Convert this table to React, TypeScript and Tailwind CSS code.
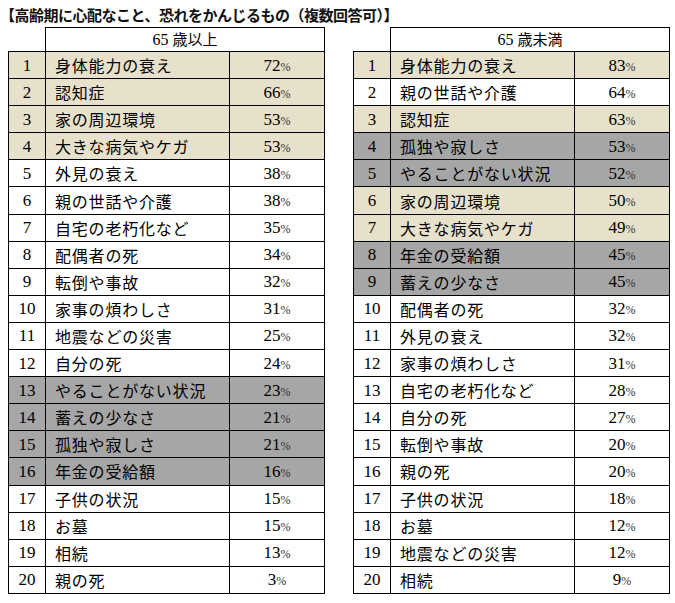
const BEIGE = 'bg-[#e7e1cc]'
const GRAY = 'bg-[#a6a6a6]'

type Row = [number, string, string, string?]

const OVER_65: Row[] = [
  [1, '身体能力の衰え', '72', BEIGE],
  [2, '認知症', '66', BEIGE],
  [3, '家の周辺環境', '53', BEIGE],
  [4, '大きな病気やケガ', '53', BEIGE],
  [5, '外見の衰え', '38'],
  [6, '親の世話や介護', '38'],
  [7, '自宅の老朽化など', '35'],
  [8, '配偶者の死', '34'],
  [9, '転倒や事故', '32'],
  [10, '家事の煩わしさ', '31'],
  [11, '地震などの災害', '25'],
  [12, '自分の死', '24'],
  [13, 'やることがない状況', '23', GRAY],
  [14, '蓄えの少なさ', '21', GRAY],
  [15, '孤独や寂しさ', '21', GRAY],
  [16, '年金の受給額', '16', GRAY],
  [17, '子供の状況', '15'],
  [18, 'お墓', '15'],
  [19, '相続', '13'],
  [20, '親の死', '3'],
]

const UNDER_65: Row[] = [
  [1, '身体能力の衰え', '83', BEIGE],
  [2, '親の世話や介護', '64'],
  [3, '認知症', '63', BEIGE],
  [4, '孤独や寂しさ', '53', GRAY],
  [5, 'やることがない状況', '52', GRAY],
  [6, '家の周辺環境', '50', BEIGE],
  [7, '大きな病気やケガ', '49', BEIGE],
  [8, '年金の受給額', '45', GRAY],
  [9, '蓄えの少なさ', '45', GRAY],
  [10, '配偶者の死', '32'],
  [11, '外見の衰え', '32'],
  [12, '家事の煩わしさ', '31'],
  [13, '自宅の老朽化など', '28'],
  [14, '自分の死', '27'],
  [15, '転倒や事故', '20'],
  [16, '親の死', '20'],
  [17, '子供の状況', '18'],
  [18, 'お墓', '12'],
  [19, '地震などの災害', '12'],
  [20, '相続', '9'],
]

const serif = "font-['Liberation_Serif','Noto_Sans_CJK_JP',serif]"
const jp = "font-['Noto_Sans_CJK_JP',sans-serif]"

function RankTable({ title, rows }: { title: string; rows: Row[] }) {
  return (
    <table className="w-[316px] table-fixed border-collapse text-black">
      <colgroup>
        <col className="w-[37px]" />
        <col className="w-[184px]" />
        <col className="w-[95px]" />
      </colgroup>
      <thead>
        <tr className="h-[24px]">
          <th className="border-0 p-0" />
          <th className={`border border-black p-0 text-center text-[16px] font-normal leading-none ${serif}`} colSpan={2}>
            65<span className={`ml-[4px] ${jp} text-[15px]`}>{title}</span>
          </th>
        </tr>
      </thead>
      <tbody>
        {rows.map(([rank, label, pct, tone]) => (
          <tr className={`h-[27.1px] ${tone ?? 'bg-white'}`} key={rank}>
            <td className={`border border-black p-0 text-center text-[17px] leading-none ${serif}`}>{rank}</td>
            <td className={`border border-black py-0 pl-[9px] pr-0 text-[16px] tracking-[0.8px] leading-none whitespace-nowrap ${jp}`}>{label}</td>
            <td className={`border border-black p-0 text-center text-[17px] leading-none ${serif}`}>
              {pct}<span className="text-[12px] text-[#333]">%</span>
            </td>
          </tr>
        ))}
      </tbody>
    </table>
  )
}

export default function App() {
  return (
    <div className="h-[603px] w-[675px] bg-white">
      <div className={`h-[27px] pt-[5px] text-[15px] leading-[20px] font-bold tracking-[-0.5px] text-[#111] ${jp}`}>
        【高齢期に心配なこと、恐れをかんじるもの（複数回答可）】
      </div>
      <div className="flex gap-[28px] pl-[8px]">
        <RankTable rows={OVER_65} title="歳以上" />
        <RankTable rows={UNDER_65} title="歳未満" />
      </div>
    </div>
  )
}
